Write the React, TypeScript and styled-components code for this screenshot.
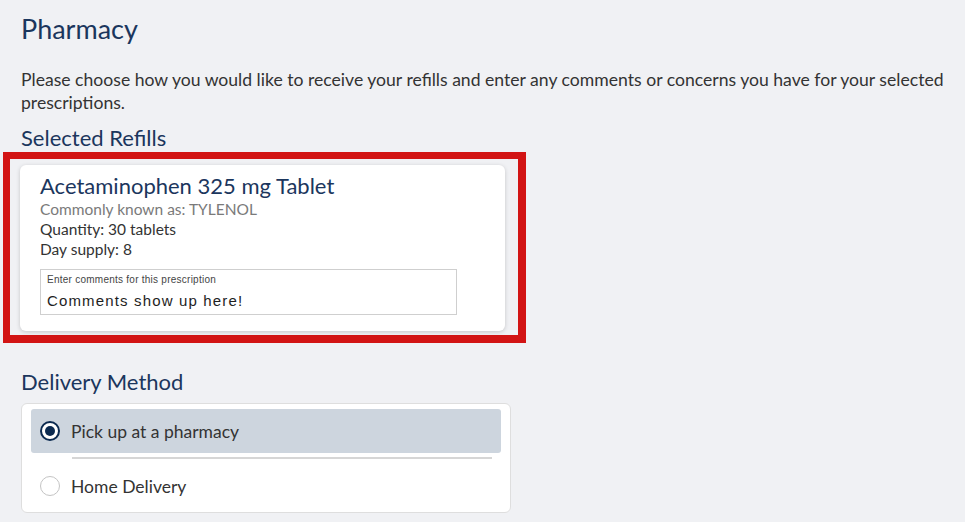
import React from "react";
import styled, { createGlobalStyle } from "styled-components";

const GlobalStyle = createGlobalStyle`
  html, body {
    margin: 0;
    padding: 0;
    background: #f0f1f4;
  }
  body {
    font-family: "Lato", "Noto Sans", sans-serif;
    color: #333333;
  }
  * { box-sizing: border-box; }
`;

const Page = styled.main`
  padding: 13px 21px 0 21px;
  width: 965px;
  height: 522px;
  overflow: hidden;
`;

const Title = styled.h1`
  margin: 0;
  font-size: 27px;
  line-height: 32px;
  font-weight: 400;
  color: #1b365d;
`;

const Intro = styled.p`
  margin: 23px 0 0 0;
  font-size: 17.6px;
  line-height: 23px;
  color: #333333;
`;

const SectionTitle = styled.h2<{ $top: number }>`
  margin: ${(p) => p.$top}px 0 0 0;
  font-size: 22px;
  line-height: 28px;
  font-weight: 400;
  color: #1b365d;
`;

const Highlight = styled.div`
  margin-left: -18px;
  width: 523px;
  border: 7px solid #d21414;
  border-bottom-width: 8px;
  border-right-width: 8px;
  padding: 6px 13px 4px 10px;
`;

const Card = styled.section`
  background: #ffffff;
  border-radius: 6px;
  box-shadow: 0 1px 4px rgba(0, 0, 0, 0.18);
  padding: 8px 20px 16px 20px;
`;

const DrugName = styled.h3`
  margin: 0;
  font-size: 22px;
  line-height: 26px;
  font-weight: 400;
  color: #1b365d;
`;

const Detail = styled.div<{ $muted?: boolean }>`
  font-size: 15.5px;
  line-height: 20px;
  color: ${(p) => (p.$muted ? "#7a7a7a" : "#333333")};
`;

const CommentBox = styled.label`
  display: block;
  margin-top: 10px;
  width: 417px;
  height: 46px;
  border: 1px solid #cfcfcf;
  background: #ffffff;
  padding: 4px 6px 0 6px;
`;

const CommentLabel = styled.span`
  display: block;
  font-family: "Liberation Sans", Arial, sans-serif;
  font-size: 10px;
  line-height: 12px;
  letter-spacing: 0.25px;
  color: #444444;
`;

const CommentText = styled.span`
  display: block;
  margin-top: 5px;
  font-family: "Liberation Sans", Arial, sans-serif;
  font-size: 15px;
  line-height: 20px;
  letter-spacing: 1.15px;
  color: #1e1e1e;
`;

const RadioGroup = styled.div`
  margin-top: 7px;
  width: 490px;
  background: #ffffff;
  border: 1px solid #dedede;
  border-radius: 6px;
  padding: 5px 9px 4px 9px;
`;

const Option = styled.div<{ $selected?: boolean }>`
  display: flex;
  align-items: center;
  gap: 11px;
  height: 44px;
  padding-left: 9px;
  border-radius: 3px;
  background: ${(p) => (p.$selected ? "#cdd5de" : "transparent")};
  font-size: 17.5px;
  color: #333333;
`;

const Radio = styled.span<{ $checked?: boolean }>`
  flex: none;
  width: 20px;
  height: 20px;
  border-radius: 50%;
  background: #ffffff;
  border: ${(p) => (p.$checked ? "2px solid #0b2a50" : "1px solid #c4c4c4")};
  display: flex;
  align-items: center;
  justify-content: center;
  &::after {
    content: "";
    display: ${(p) => (p.$checked ? "block" : "none")};
    width: 10px;
    height: 10px;
    border-radius: 50%;
    background: #0b2a50;
  }
`;

const Divider = styled.hr`
  margin: 4px 0 5px 41px;
  width: 420px;
  height: 2px;
  border: none;
  background: #d6d6d6;
`;

export default function App() {
  return (
    <>
      <GlobalStyle />
      <Page>
        <Title>Pharmacy</Title>
        <Intro>
          Please choose how you would like to receive your refills and enter any comments or concerns you have for your
          selected prescriptions.
        </Intro>
        <SectionTitle $top={10}>Selected Refills</SectionTitle>
        <Highlight>
          <Card>
            <DrugName>Acetaminophen 325 mg Tablet</DrugName>
            <Detail $muted>Commonly known as: TYLENOL</Detail>
            <Detail>Quantity: 30 tablets</Detail>
            <Detail>Day supply: 8</Detail>
            <CommentBox>
              <CommentLabel>Enter comments for this prescription</CommentLabel>
              <CommentText>Comments show up here!</CommentText>
            </CommentBox>
          </Card>
        </Highlight>
        <SectionTitle $top={25}>Delivery Method</SectionTitle>
        <RadioGroup>
          <Option $selected>
            <Radio $checked />
            Pick up at a pharmacy
          </Option>
          <Divider />
          <Option>
            <Radio />
            Home Delivery
          </Option>
        </RadioGroup>
      </Page>
    </>
  );
}
